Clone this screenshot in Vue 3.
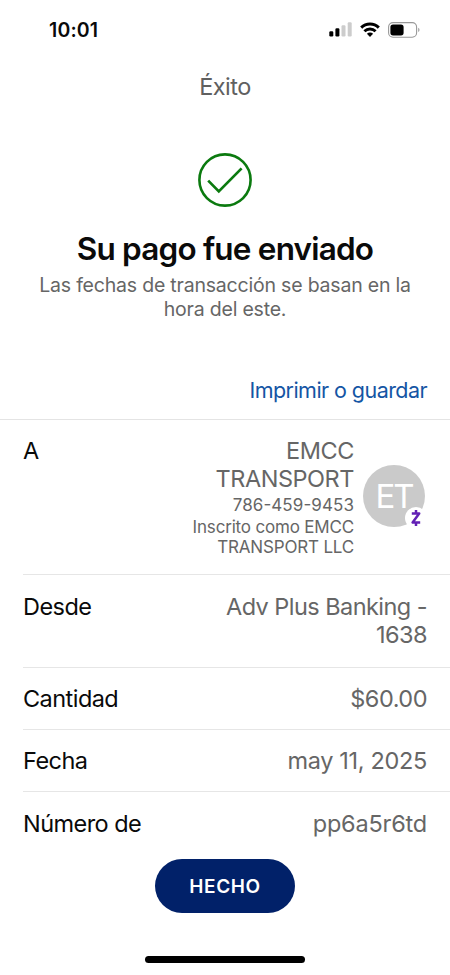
<script setup>
const rows = [
  { label: 'Cantidad', value: '$60.00', cls: 'amount' },
  { label: 'Fecha', value: 'may 11, 2025', cls: 'date' },
  { label: 'Número de', value: 'pp6a5r6td', cls: 'number' },
]
</script>

<template>
  <main class="screen">
    <header class="status">
      <span class="time">10:01</span>
      <div class="indicators">
        <svg class="signal" width="24" height="16" viewBox="0 0 24 16">
          <rect x="0.3" y="9.2" width="4" height="5.3" rx="1.2" fill="#000" />
          <rect x="6.4" y="6.2" width="4" height="8.3" rx="1.2" fill="#000" />
          <rect x="12.5" y="3.2" width="4" height="11.3" rx="1.2" fill="#ccc" />
          <rect x="18.7" y="0.3" width="4" height="14.2" rx="1.2" fill="#ccc" />
        </svg>
        <svg class="wifi" width="20" height="16" viewBox="0 0 20 16">
          <g fill="none" stroke="#000" stroke-width="2.9">
            <path d="M1.2 5.6C6.1 .7 13.9 .7 18.8 5.6" />
            <path d="M4.4 9.2C7.5 6.2 12.5 6.2 15.6 9.2" />
          </g>
          <path d="M6.9 11.7C8.7 10.2 11.3 10.2 13.1 11.7L10 14.9Z" fill="#000" />
        </svg>
        <svg class="battery" width="32" height="16" viewBox="0 0 32 16">
          <rect x="0.6" y="0.6" width="28" height="14.6" rx="4.4" fill="#fff" stroke="#999" stroke-width="1.1" />
          <rect x="2.4" y="2.4" width="13.2" height="11" rx="2.6" fill="#000" />
          <path d="M30.3 5.8C31.8 6.5 31.8 9.4 30.3 10.1Z" fill="#8c8c8c" />
        </svg>
      </div>
    </header>

    <div class="nav-title"><span>Éxito</span></div>

    <section class="hero">
      <svg class="check" width="56" height="56" viewBox="0 0 56 56" fill="none" stroke="#0b7a0f">
        <circle cx="28" cy="28" r="25.6" stroke-width="2.6" />
        <path d="M11.2 28.6L21.8 39.4L44.6 16.4" stroke-width="2.7" />
      </svg>
      <h1>Su pago fue enviado</h1>
      <p>Las fechas de transacción se basan en la<br />hora del este.</p>
    </section>

    <div class="action"><a class="print">Imprimir o guardar</a></div>

    <section class="details">
      <div class="row recipient">
        <span class="label">A</span>
        <div class="payee">
          <span class="name">EMCC<br />TRANSPORT</span>
          <span class="phone">786-459-9453</span>
          <span class="enrolled">Inscrito como EMCC<br />TRANSPORT LLC</span>
        </div>
        <div class="avatar">
          <span class="initials">ET</span>
          <svg class="zelle" width="22" height="22" viewBox="0 0 22 22">
            <circle cx="11" cy="11" r="11" fill="#fff" />
            <path d="M6.8 6.6H14.2L7.6 15.4H15.2M11 3V6.6M11 15.4V19" fill="none" stroke="#6320b5" stroke-width="2.5" stroke-linejoin="round" />
          </svg>
        </div>
      </div>
      <div class="row source">
        <span class="label">Desde</span>
        <span class="value account">Adv Plus Banking -<br />1638</span>
      </div>
      <div v-for="row in rows" :key="row.label" class="row single">
        <span class="label">{{ row.label }}</span>
        <span class="value" :class="row.cls">{{ row.value }}</span>
      </div>
    </section>

    <footer class="bottom">
      <button class="done">HECHO</button>
      <div class="home"></div>
    </footer>
  </main>
</template>

<style>
body { background: #fff; }
</style>

<style scoped>
.screen {
  width: 450px;
  height: 975px;
  display: flex;
  flex-direction: column;
  overflow: hidden;
  background: #fff;
  color: #0a0a0a;
  font-family: Inter, "Liberation Sans", sans-serif;
}
.status {
  height: 60px;
  flex: none;
  box-sizing: border-box;
  padding: 0 30px 0 49px;
  display: flex;
  justify-content: space-between;
  align-items: center;
}
.time { font-size: 19.5px; font-weight: 600; letter-spacing: 0.15px; line-height: 24px; }
.indicators { display: flex; align-items: center; height: 16px; }
.wifi { margin-left: 7px; }
.battery { margin-left: 8px; }
.nav-title {
  height: 54px;
  flex: none;
  text-align: center;
  color: #606060;
  font-size: 23.5px;
  line-height: 54px;
  letter-spacing: -0.5px;
}
.hero { height: 256px; flex: none; display: flex; flex-direction: column; align-items: center; }
.check { margin-top: 38px; }
h1 {
  margin: 21px 0 0;
  font-size: 31.5px;
  line-height: 40px;
  font-weight: 600;
  letter-spacing: -0.8px;
  white-space: nowrap;
}
p {
  margin: 5px 0 0;
  font-size: 19.5px;
  line-height: 23.5px;
  color: #666;
  text-align: center;
  letter-spacing: -0.2px;
  white-space: nowrap;
}
.action {
  height: 49px;
  flex: none;
  padding: 0 23px;
  text-align: right;
}
.print { color: #1455a4; font-size: 21.5px; line-height: 41px; letter-spacing: -0.56px; white-space: nowrap; }
.details { flex: none; border-top: 1px solid #e4e4e4; }
.row {
  margin-left: 23px;
  padding: 17.5px 23px 0 0;
  box-sizing: border-box;
  display: flex;
  align-items: flex-start;
  font-size: 23.5px;
  line-height: 28.3px;
  white-space: nowrap;
  border-bottom: 1px solid #e6e6e6;
}
.row:last-child { border-bottom: 0; }
.recipient { height: 155px; padding-top: 16.5px; }
.source { height: 92.5px; }
.single { height: 62.3px; }
.label { flex: 1; letter-spacing: -0.55px; }
.value { color: #666; text-align: right; letter-spacing: -0.5px; }
.account { letter-spacing: -0.55px; }
.date { letter-spacing: -0.33px; }
.number { letter-spacing: -0.2px; }
.payee { display: flex; flex-direction: column; text-align: right; color: #666; }
.name { letter-spacing: -0.45px; }
.phone { font-size: 17px; line-height: 24px; font-feature-settings: "case" 1; letter-spacing: 0.08px; }
.enrolled { font-size: 17px; line-height: 20px; letter-spacing: -0.18px; }
.avatar {
  position: relative;
  flex: none;
  width: 62px;
  height: 62px;
  margin: 28px 2px 0 9px;
  border-radius: 50%;
  background: #cacaca;
  color: #fff;
  text-align: center;
}
.initials { font-size: 33px; line-height: 63px; font-weight: 400; letter-spacing: -2px; }
.zelle { position: absolute; left: 42px; top: 42px; }
.bottom { position: absolute; top: 859px; left: 0; width: 450px; height: 116px; display: flex; flex-direction: column; align-items: center; }
.done {
  width: 140px;
  height: 54px;
  padding: 1px 0 0;
  border: 0;
  border-radius: 27px;
  background: #012169;
  color: #fff;
  font: 600 19px/53px Inter, sans-serif;
  letter-spacing: 0.6px;
}
.home { width: 160px; height: 7px; margin-top: 43px; border-radius: 4px; background: #000; }
</style>
